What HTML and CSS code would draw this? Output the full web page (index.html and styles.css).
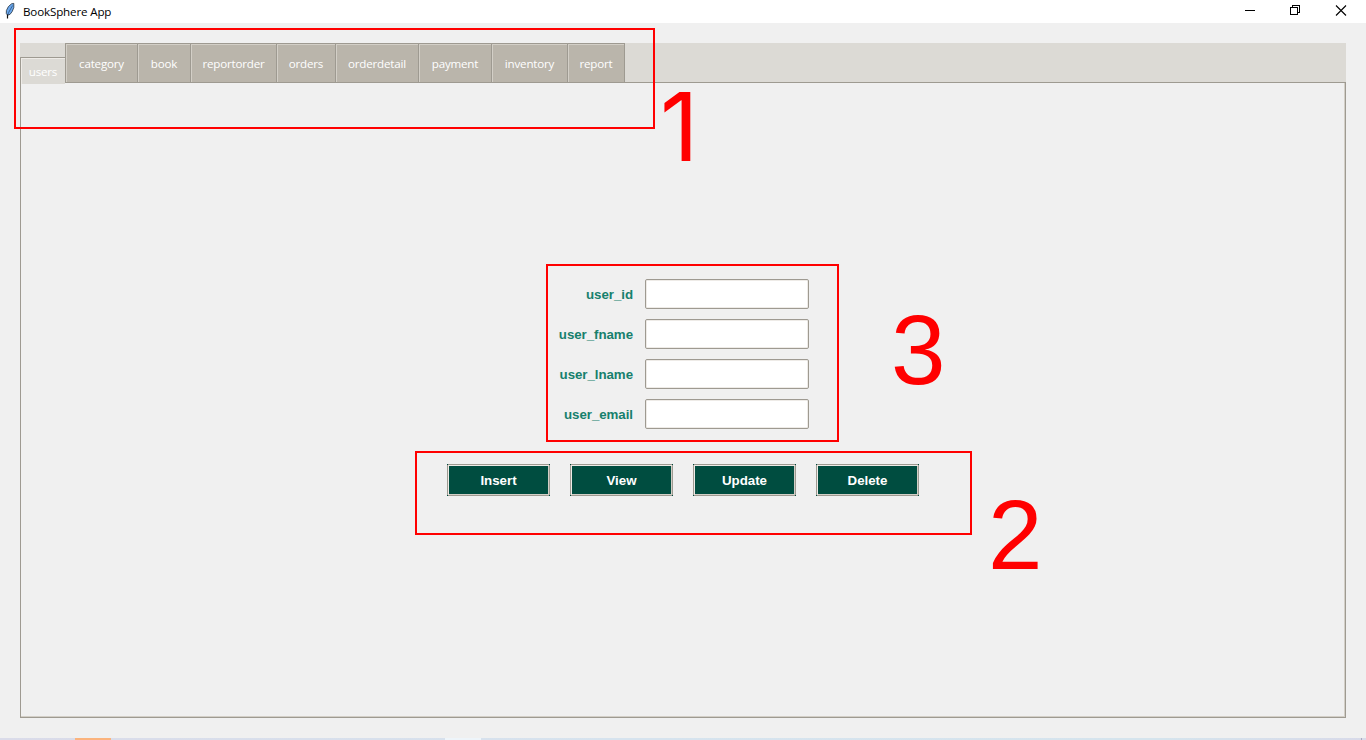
FILE: index.html
```html
<!DOCTYPE html>
<html lang="en">
<head>
<meta charset="utf-8">
<title>BookSphere App</title>
<link rel="stylesheet" href="styles.css">
</head>
<body>
<div class="window">
  <header class="titlebar">
    <svg class="feather" width="12" height="18" viewBox="0 0 12 18">
      <path d="M3.6 13.2L2.3 11.5L2.4 8.5L4.4 4.6L7.5 1.8L9.8 1.4L9.8 5.5L8.2 9.5L6 12.4Z" fill="#6ba8ee" stroke="#26323e" stroke-width=".8"/>
      <path d="M3.5 13.5L4.6 10.5L8.600 3.500" fill="none" stroke="#23456b" stroke-width=".7"/>
      <path d="M3.500 12.500V16.500" stroke="#101010" stroke-width="1.2"/>
    </svg>
    <span class="title">BookSphere App</span>
    <svg class="controls" width="104" height="12" viewBox="0 0 104 12" fill="none" stroke="#000" shape-rendering="crispEdges">
      <path d="M0 5.5H10"/>
      <path d="M45.5 2.5H52.5V9.5H45.5ZM47.5 2V0.5H54.5V7.5H53"/>
      <path shape-rendering="auto" d="M91 0.500L101 10.500M101 0.500L91 10.500" stroke-width="1.1"/>
    </svg>
  </header>
  <main class="notebook">
    <nav class="tabs">
      <div class="tab active">users</div>
      <div class="tab w72">category</div>
      <div class="tab w53">book</div>
      <div class="tab w86">reportorder</div>
      <div class="tab w59">orders</div>
      <div class="tab w83">orderdetail</div>
      <div class="tab w73">payment</div>
      <div class="tab w76">inventory</div>
      <div class="tab w58 last">report</div>
    </nav>
    <section class="panel">
      <form class="fields">
        <label for="uid">user_id</label><input id="uid">
        <label for="fname">user_fname</label><input id="fname">
        <label for="lname">user_lname</label><input id="lname">
        <label for="email">user_email</label><input id="email">
      </form>
      <div class="actions">
        <button type="button">Insert</button>
        <button type="button">View</button>
        <button type="button">Update</button>
        <button type="button">Delete</button>
      </div>
    </section>
  </main>
  <footer class="taskbar"><i class="task orange"></i><i class="task pale"></i><i class="edge"></i></footer>
  <div class="mark mark-tabs"></div>
  <div class="mark mark-form"></div>
  <div class="mark mark-actions"></div>
  <div class="num num-1">1</div>
  <div class="num num-2">2</div>
  <div class="num num-3">3</div>
</div>
</body>
</html>
```
FILE: styles.css
```css
* { box-sizing: border-box; }
body { margin: 0; }
.window {
  position: relative;
  display: flex;
  flex-direction: column;
  width: 1366px;
  height: 740px;
  overflow: hidden;
  background: #f0f0f0;
}
.titlebar {
  display: flex;
  height: 23px;
  padding-left: 4px;
  background: #fff;
  font: 11.6px/23px "Open Sans", sans-serif;
  color: #000;
}
.feather { margin-top: 2px; }
.title { margin-left: 7px; letter-spacing: -0.15px; }
.controls { margin: 5px 17px 0 auto; }
.notebook {
  flex: 1;
  display: flex;
  flex-direction: column;
  margin: 20px 20px 20px;
}
.tabs {
  position: relative;
  display: flex;
  align-items: flex-end;
  height: 39px;
  background: #dcdad5;
}
.tab {
  height: 39px;
  border-top: 1px solid #9e9a91;
  border-left: 1px solid #9e9a91;
  background: #bab5ab;
  box-shadow: inset 1px 1px #d3cfc7;
  font: 11.6px/40px "Open Sans", sans-serif;
  letter-spacing: -0.2px;
  text-align: center;
  color: #fff;
  border-top-left-radius: 1px;
}
.tab.active {
  width: 45px;
  height: 27px;
  margin-bottom: -2px;
  background: #dcdad5;
  box-shadow: inset 1px 1px #eeebe7;
  line-height: 28px;
}
.last { border-right: 1px solid #9e9a91; }
.w72 { width: 72px; }
.w53 { width: 53px; }
.w86 { width: 86px; }
.w59 { width: 59px; }
.w83 { width: 83px; }
.w73 { width: 73px; }
.w76 { width: 76px; }
.w58 { width: 58px; }
.panel {
  flex: 1;
  display: flex;
  flex-direction: column;
  align-items: flex-start;
  border: 1px solid #9e9a91;
  box-shadow: inset -1px -1px #d3cfc7;
  padding-top: 196px;
}
.fields {
  display: grid;
  grid-template-columns: 100px 164px;
  grid-auto-rows: 30px;
  gap: 10px 12px;
  margin-left: 512px;
}
.fields label {
  font: bold 13.3px/31px "Liberation Sans", Arial, sans-serif;
  letter-spacing: -0.05px;
  text-align: right;
  color: #17806d;
}
.fields input {
  width: 164px;
  height: 30px;
  border: 1px solid #9e9a91;
  border-radius: 2px;
  background: #fff;
  box-shadow: inset 0 0 0 1px #eeebe7;
}
.actions { display: flex; gap: 20px; margin: 35px 0 0 426px; }
/* The frame lines stop one pixel short, leaving dark corner dots. */
.actions button {
  width: 103px;
  height: 32px;
  padding: 2px 0 0;
  border: 1px solid transparent;
  background:
    linear-gradient(#9e9a91, #9e9a91) center top / calc(100% - 2px) 1px no-repeat border-box,
    linear-gradient(#9e9a91, #9e9a91) center bottom / calc(100% - 2px) 1px no-repeat border-box,
    linear-gradient(#9e9a91, #9e9a91) left center / 1px calc(100% - 2px) no-repeat border-box,
    linear-gradient(#9e9a91, #9e9a91) right center / 1px calc(100% - 2px) no-repeat border-box,
    #004d40 border-box;
  box-shadow: inset 1px 1px #eeebe7, inset -1px -1px #d3cfc7;
  font: bold 13.3px/28px "Liberation Sans", Arial, sans-serif;
  color: #fff;
}
.taskbar {
  display: flex;
  height: 2px;
  background: linear-gradient(90deg, #dadbe9, #d6e3ee 45%, #d5e4ed 85%, #d8dae9);
}
.task { width: 36px; height: 2px; }
.orange { margin-left: 75px; background: #fbb37d; }
.pale { margin-left: 334px; background: #eef5fa; }
.edge { width: 1px; height: 2px; margin: 0 4px 0 auto; background: #a9a9bf; }
.mark { position: absolute; border: 2px solid #f00; }
.mark-tabs { left: 14px; top: 28px; width: 641px; height: 101px; }
.mark-form { left: 546px; top: 264px; width: 293px; height: 178px; }
.mark-actions { left: 415px; top: 451px; width: 557px; height: 84px; }
.num {
  position: absolute;
  font: 98px/98px "Liberation Sans", Arial, sans-serif;
  color: #f00;
}
.num-1 { left: 660px; top: 79px; font: 95px/95px Inter, sans-serif; }
.num-2 { left: 988px; top: 486px; }
.num-3 { left: 891px; top: 301px; }
```
